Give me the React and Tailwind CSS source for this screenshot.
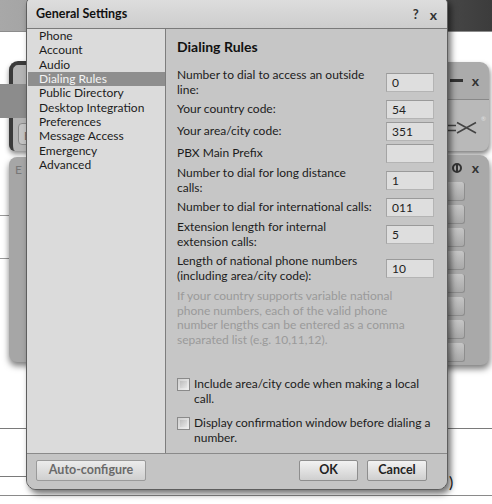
export default function App() {
  const nav = [
    "Phone",
    "Account",
    "Audio",
    "Dialing Rules",
    "Public Directory",
    "Desktop Integration",
    "Preferences",
    "Message Access",
    "Emergency",
    "Advanced",
  ];
  const rows = [
    { label: ["Number to dial to access an outside", "line:"], value: "0" },
    { label: ["Your country code:"], value: "54" },
    { label: ["Your area/city code:"], value: "351" },
    { label: ["PBX Main Prefix"], value: "" },
    { label: ["Number to dial for long distance", "calls:"], value: "1" },
    { label: ["Number to dial for international calls:"], value: "011" },
    { label: ["Extension length for internal", "extension calls:"], value: "5" },
    { label: ["Length of national phone numbers", "(including area/city code):"], value: "10", extra: true },
  ];
  return (
    <div className="relative w-[492px] h-[504px] overflow-hidden bg-white font-['Lato','Liberation_Sans',sans-serif] text-[12px] text-[#1c1c1c]">
      {/* background app header */}
      <div className="h-[32px] border-b border-[#8c8c8c] bg-[linear-gradient(to_right,#a8a8a8,#9c9c9c_20%,#6a6a6a_60%,#3c3c3c)]" />

      {/* background lines */}
      <div className="absolute left-0 top-[215px] w-[10px] h-px bg-[#9a9a9a]" />
      <div className="absolute left-0 top-[258px] w-[10px] h-px bg-[#9a9a9a]" />
      <div className="absolute left-0 top-[428px] w-[492px] h-px bg-[#7a7a7a]" />
      <div className="absolute left-0 top-[476px] w-[40px] h-px bg-[#7a7a7a]" />
      <div className="absolute left-0 top-[495px] w-[492px] h-px bg-[#8a8a8a]" />
      <div className="absolute left-[449px] top-[470px] text-[16px] text-[#222]">)</div>

      {/* left background windows */}
      <div className="absolute left-[9px] top-[61px] w-[40px] h-[90px] rounded-tl-[9px] rounded-bl-[6px] border-t-[4px] border-l-[4px] border-[#3a3a3a] bg-[#b4b4b4] shadow-[0_3px_5px_rgba(0,0,0,0.45)]">
        <div className="absolute left-[5px] top-[58px] w-[20px] h-[22px] rounded-sm border border-[#8a8a8a] bg-[#c4c4c4] text-[#666] pl-[5px] pt-[3px]">E</div>
      </div>
      <div className="absolute left-0 top-[84px] w-[30px] h-[34px] bg-[#8c8c8c]" />
      <div className="absolute left-[9px] top-[157px] w-[40px] h-[205px] rounded-tl-[8px] rounded-bl-[8px] bg-[#a6a6a6] shadow-[0_4px_6px_rgba(0,0,0,0.5)]">
        <div className="pl-[6px] pt-[4px] text-[#777]">E</div>
      </div>

      {/* right background windows */}
      <div className="absolute left-[420px] top-[62px] w-[69px] h-[89px] rounded-tr-[9px] rounded-br-[8px] bg-[#ababab] shadow-[1px_3px_5px_rgba(0,0,0,0.5)] overflow-hidden">
        <div className="h-[37px] flex items-center justify-end pr-[10px] gap-[9px]">
          <div className="w-[13px] h-[3px] bg-[#333]" />
          <div className="text-[14px] font-bold text-[#333] leading-none">x</div>
        </div>
        <div className="h-[52px] border-t border-[#888] bg-[#b9b9b9] relative">
          <svg className="absolute left-[27px] top-[20px]" width="32" height="16" viewBox="0 0 32 16">
            <path d="M0 5.5H9M0 10.5H9" stroke="#444" strokeWidth="1.6" fill="none" />
            <path d="M10 2.5L29 13M10 13L29 2.5" stroke="#444" strokeWidth="1.6" fill="none" />
          </svg>
          <div className="absolute left-[61px] top-[14px] text-[6px] text-[#e0e0e0]">®</div>
        </div>
      </div>
      <div className="absolute left-[420px] top-[155px] w-[69px] h-[210px] rounded-tr-[9px] rounded-br-[8px] bg-[#a9a9a9] shadow-[1px_4px_6px_rgba(0,0,0,0.5)]">
        <div className="h-[26px] flex items-center justify-end pr-[10px] gap-[10px]">
          <div className="w-[10px] h-[10px] rounded-full border-[2px] border-[#333] flex items-center justify-center">
            <div className="w-[2px] h-[6px] bg-[#333]" />
          </div>
          <div className="text-[14px] font-bold text-[#333] leading-none">x</div>
        </div>
        <div className="flex flex-col gap-[4px] pl-[27px] pt-[1px]">
          {[0, 1, 2, 3, 4, 5, 6, 7].map((i) => (
            <div key={i} className="w-[18px] h-[19px] rounded-r-[3px] bg-[linear-gradient(#c6c6c6,#a8a8a8)] border-r border-b border-[#8e8e8e]" />
          ))}
        </div>
      </div>

      {/* dialog */}
      <div className="absolute left-[26px] top-[-3px] w-[422px] h-[493px] flex flex-col rounded-t-[7px] rounded-b-[10px] border border-[#5e5e5e] overflow-hidden shadow-[3px_4px_6px_rgba(0,0,0,0.55)] bg-[#c6c6c6]">
        <div className="h-[31px] shrink-0 flex items-center justify-between pl-[9px] pr-[10px] pt-[3px] border-b border-[#7a7a7a] bg-[linear-gradient(#dedede,#cdcdcd)]">
          <div className="font-bold text-[12.5px] text-[#111]">General Settings</div>
          <div className="flex items-center gap-[11px] font-bold text-[13px] text-[#333]">
            <span>?</span>
            <span className="text-[14px]">x</span>
          </div>
        </div>
        <div className="flex h-[424px] shrink-0">
          <div className="w-[139px] shrink-0 bg-[#dbdbdb] border-r border-[#7d7d7d]">
            {nav.map((n) => (
              <div
                key={n}
                className={
                  n === "Dialing Rules"
                    ? "h-[14.35px] leading-[14.35px] pl-[11px] ml-px bg-[#8e8e8e] text-[#f4f4f4]"
                    : "h-[14.35px] leading-[14.35px] pl-[11px] ml-px text-[#1c1c1c]"
                }
              >
                {n}
              </div>
            ))}
          </div>
          <div className="flex-1 bg-[#c6c6c6] pl-[11px] pr-[13px] pt-[9px]">
            <div className="font-bold text-[14px] leading-[18px] text-[#111] mb-[12px]">Dialing Rules</div>
            <div className="flex flex-col gap-[3px]">
              {rows.map((r, i) => (
                <div key={i} className={"flex items-center justify-between" + (r.extra ? " mt-[2px]" : "")}>
                  <div className="leading-[14.5px]">
                    {r.label.map((l, j) => (
                      <div key={j}>{l}</div>
                    ))}
                  </div>
                  <div className="w-[48px] h-[19px] shrink-0 bg-[#dedede] border border-[#b4b4b4] border-t-[#9a9a9a] border-l-[#a4a4a4] pl-[5px] leading-[17px] text-[#222]">
                    {r.value}
                  </div>
                </div>
              ))}
            </div>
            <div className="mt-[6px] leading-[14.5px] text-[#9a9a9a]">
              <div>If your country supports variable national</div>
              <div>phone numbers, each of the valid phone</div>
              <div>number lengths can be entered as a comma</div>
              <div>separated list (e.g. 10,11,12).</div>
            </div>
            <div className="mt-[30px] flex gap-[4px]">
              <div className="mt-[1px] w-[13px] h-[13px] shrink-0 border border-[#8a8a8a] bg-[linear-gradient(135deg,#cfcfcf,#f0f0f0)] p-[2px]">
                <div className="w-full h-full bg-[linear-gradient(135deg,#bdbdbd,#e6e6e6)]" />
              </div>
              <div className="leading-[14.5px]">
                <div>Include area/city code when making a local</div>
                <div>call.</div>
              </div>
            </div>
            <div className="mt-[10px] flex gap-[4px]">
              <div className="mt-[1px] w-[13px] h-[13px] shrink-0 border border-[#8a8a8a] bg-[linear-gradient(135deg,#cfcfcf,#f0f0f0)] p-[2px]">
                <div className="w-full h-full bg-[linear-gradient(135deg,#bdbdbd,#e6e6e6)]" />
              </div>
              <div className="leading-[14.5px]">
                <div>Display confirmation window before dialing a</div>
                <div>number.</div>
              </div>
            </div>
          </div>
        </div>
        <div className="flex-1 border-t border-[#8a8a8a] bg-[#c4c4c4] flex items-start justify-between pl-[9px] pr-[20px] pt-[6px]">
          <div className="w-[110px] h-[21px] rounded-[2px] border border-[#9a9a9a] bg-[linear-gradient(#ececec,#cfcfcf)] flex items-center justify-center font-bold text-[12.5px] text-[#6a6a6a]">
            Auto-configure
          </div>
          <div className="flex gap-[9px]">
            <div className="w-[59px] h-[21px] rounded-[2px] border border-[#8e8e8e] bg-[linear-gradient(#f2f2f2,#cfcfcf)] flex items-center justify-center font-bold text-[12.5px] text-[#222]">
              OK
            </div>
            <div className="w-[60px] h-[21px] rounded-[2px] border border-[#8e8e8e] bg-[linear-gradient(#f2f2f2,#cfcfcf)] flex items-center justify-center font-bold text-[12.5px] text-[#222]">
              Cancel
            </div>
          </div>
        </div>
      </div>
    </div>
  );
}
